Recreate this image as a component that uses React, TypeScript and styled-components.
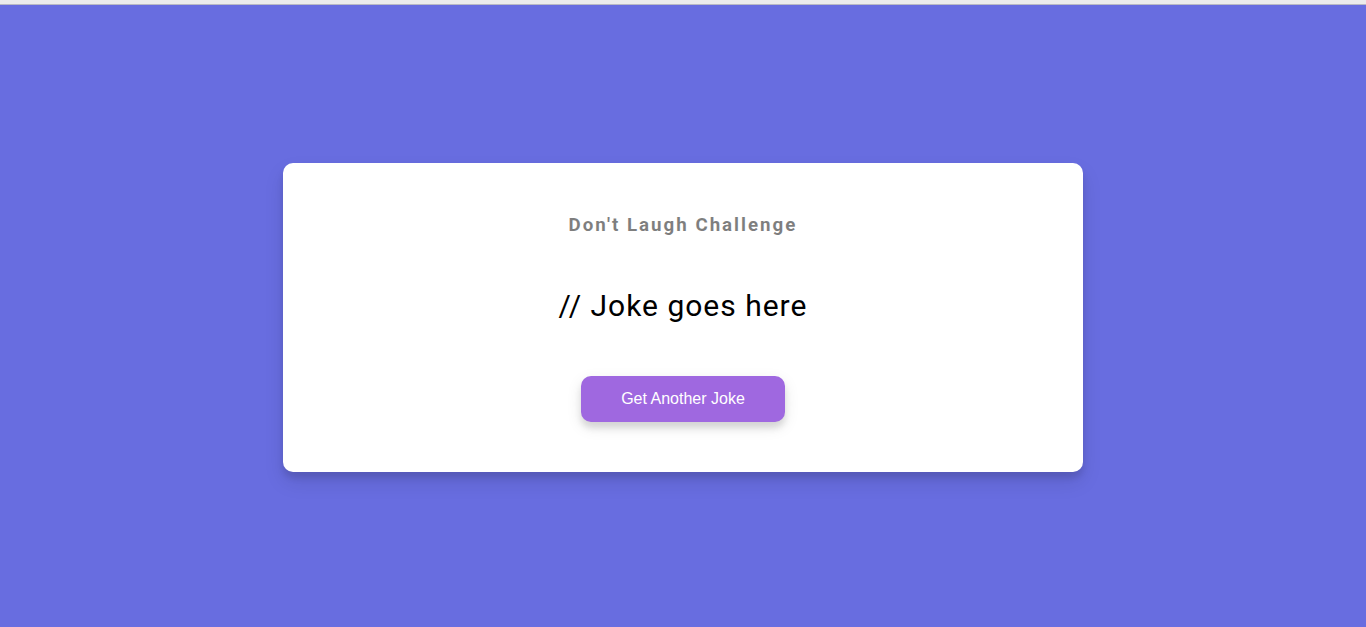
import React from "react";
import styled, { createGlobalStyle } from "styled-components";

const GlobalStyle = createGlobalStyle`
  * { box-sizing: border-box; }
  html, body { margin: 0; padding: 0; }
  body {
    background: #686de0;
    font-family: Roboto, "Noto Sans", sans-serif;
    overflow: hidden;
  }
`;

const TopStrip = styled.div`
  height: 5px;
  background: #ececec;
  border-bottom: 1px solid #b9b9c4;
`;

const Page = styled.main`
  display: flex;
  flex-direction: column;
  align-items: center;
  justify-content: center;
  height: calc(100vh - 5px);
  padding: 22px 20px 20px;
`;

const Card = styled.section`
  background: #fff;
  border-radius: 10px;
  box-shadow: 0 10px 20px rgba(0, 0, 0, 0.1), 0 6px 6px rgba(0, 0, 0, 0.1);
  padding: 51px 20px 50px;
  text-align: center;
  width: 800px;
  max-width: 100%;
`;

const Title = styled.h3`
  margin: 0;
  font-size: 18.72px;
  line-height: 22px;
  font-weight: 700;
  letter-spacing: 2px;
  opacity: 0.5;
  color: #000;
`;

const Joke = styled.div`
  font-size: 30px;
  letter-spacing: 1px;
  line-height: 40px;
  margin: 50px auto;
  max-width: 600px;
  color: #000;
`;

const Button = styled.button`
  background: #9f68e0;
  color: #fff;
  border: 0;
  border-radius: 10px;
  box-shadow: 0 5px 15px rgba(0, 0, 0, 0.1), 0 6px 6px rgba(0, 0, 0, 0.1);
  padding: 14px 40px;
  font-family: Arial, "Liberation Sans", sans-serif;
  font-size: 16px;
  cursor: pointer;
`;

export default function App() {
  return (
    <>
      <GlobalStyle />
      <TopStrip />
      <Page>
        <Card>
          <Title>Don't Laugh Challenge</Title>
          <Joke>// Joke goes here</Joke>
          <Button>Get Another Joke</Button>
        </Card>
      </Page>
    </>
  );
}
